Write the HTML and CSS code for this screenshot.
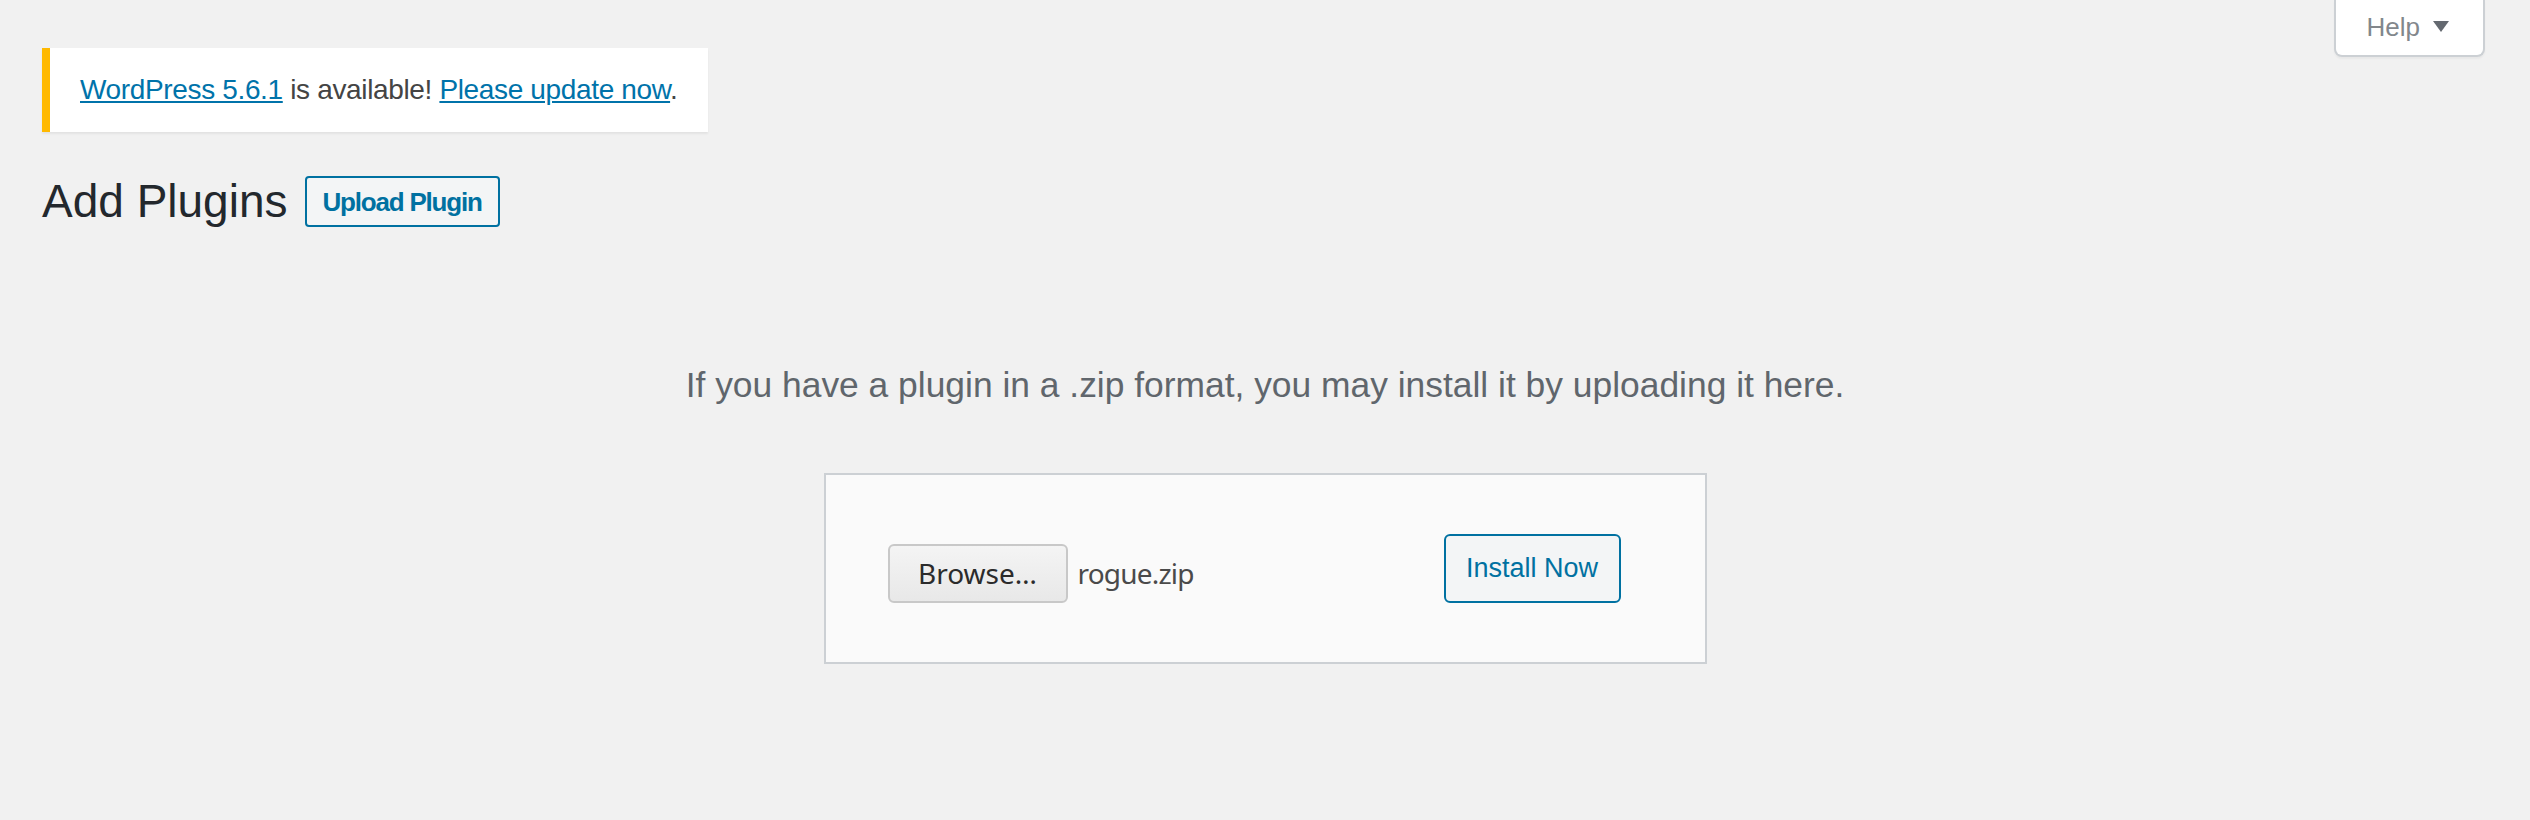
FILE: index.html
```html
<!DOCTYPE html>
<html lang="en">
<head>
<meta charset="utf-8">
<title>Add Plugins</title>
<link rel="stylesheet" href="styles.css">
</head>
<body>
<div class="top-row">
  <div class="update-nag"><a href="#">WordPress 5.6.1</a> is available! <a href="#">Please update now</a>.</div>
  <button class="help-tab" type="button">Help<svg class="help-arrow" width="16" height="11" viewBox="0 0 16 11"><path d="M0 0H16L8 11Z" fill="#646970"/></svg></button>
</div>
<div class="title-row">
  <h1 class="page-title">Add Plugins</h1>
  <a class="page-title-action" href="#">Upload Plugin</a>
</div>
<p class="install-help">If you have a plugin in a .zip format, you may install it by uploading it here.</p>
<form class="upload-form">
  <span class="file-input"><span class="browse-btn">Browse…</span><span class="file-name">rogue.zip</span></span>
  <button class="install-btn" type="button">Install Now</button>
</form>
</body>
</html>
```
FILE: styles.css
```css
html, body {
  margin: 0;
  padding: 0;
}
body {
  background: #f1f1f1;
  font-family: "Liberation Sans", Arial, sans-serif;
  color: #444;
  width: 2530px;
  height: 820px;
  overflow: hidden;
}
.top-row {
  display: flex;
  justify-content: space-between;
  align-items: flex-start;
  padding: 0 45px 0 42px;
}
.update-nag {
  margin-top: 48px;
  background: #fff;
  border-left: 8px solid #ffb900;
  box-shadow: 0 2px 2px rgba(0, 0, 0, 0.06);
  padding: 22px 30px;
  font-size: 28px;
  line-height: 40px;
  letter-spacing: -0.35px;
  color: #444;
  white-space: nowrap;
}
.update-nag a {
  color: #0073aa;
  text-decoration: underline;
  text-decoration-thickness: 2px;
  text-underline-offset: 2px;
}
.help-tab {
  display: flex;
  align-items: baseline;
  background: #fff;
  border: 2px solid #ccd0d4;
  border-top: none;
  border-radius: 0 0 8px 8px;
  box-shadow: 0 2px 2px rgba(0, 0, 0, 0.04);
  padding: 6px 34px 6px 31px;
  font-family: "Liberation Sans", Arial, sans-serif;
  font-size: 26px;
  line-height: 43px;
  color: #82878c;
  margin: 0;
}
.help-arrow {
  margin-left: 13px;
  position: relative;
  top: -4px;
}
.title-row {
  display: flex;
  align-items: flex-start;
  margin-top: 21px;
  padding-left: 42px;
}
.page-title {
  margin: 0;
  padding: 18px 0 8px;
  font-size: 46px;
  line-height: 60px;
  font-weight: 400;
  color: #23282d;
}
.page-title-action {
  margin: 23px 0 0 17px;
  padding: 9px 16px 7px;
  border: 2px solid #0071a1;
  border-radius: 4px;
  background: #f3f5f6;
  color: #0071a1;
  font-weight: 700;
  font-size: 26px;
  line-height: 31px;
  letter-spacing: -1.2px;
  text-decoration: none;
}
.install-help {
  margin: 121px 0 0;
  text-align: center;
  font-size: 35.4px;
  line-height: 50px;
  color: #60666c;
}
.upload-form {
  box-sizing: border-box;
  width: 883px;
  margin: 63px auto 0;
  padding: 59px 60px;
  background: #fafafa;
  border: 2px solid #ccd0d4;
  display: flex;
  align-items: flex-end;
}
.file-input {
  display: flex;
  align-items: baseline;
  margin-left: 2px;
  font-family: "Noto Sans", "Open Sans", sans-serif;
  font-size: 28px;
}
.browse-btn {
  box-sizing: border-box;
  width: 180px;
  height: 59px;
  line-height: 55px;
  text-align: center;
  border: 2px solid #c8c8c8;
  border-radius: 6px;
  background: linear-gradient(#f4f4f4, #e8e8e8);
  color: #2b2b2b;
}
.file-name {
  margin-left: 10px;
  color: #4a4a4a;
  letter-spacing: -0.8px;
}
.install-btn {
  box-sizing: border-box;
  margin: 0 24px 0 auto;
  width: 177px;
  height: 69px;
  padding: 0;
  border: 2px solid #0071a1;
  border-radius: 6px;
  background: #f3f5f6;
  color: #0071a1;
  font-family: "Liberation Sans", Arial, sans-serif;
  font-size: 27px;
  line-height: 65px;
  text-align: center;
}
```
